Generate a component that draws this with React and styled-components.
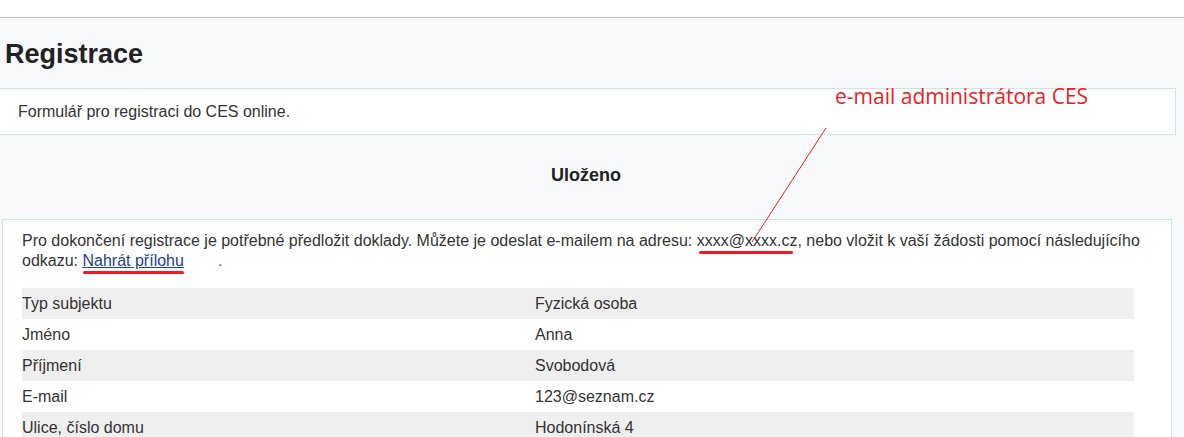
import React from "react";
import styled, { createGlobalStyle } from "styled-components";

const Global = createGlobalStyle`
  html, body { margin: 0; padding: 0; }
  body {
    background: #f8f9fb;
    font-family: "Liberation Sans", Arial, sans-serif;
    color: #333;
    font-size: 16px;
  }
`;

const TopBar = styled.div`
  height: 17px;
  background: #fff;
  border-bottom: 1px solid #c4c4c4;
`;

const Page = styled.main`
  position: relative;
  background: #f8f9fb;
  padding-bottom: 40px;
`;

const Title = styled.h1`
  margin: 20px 0 18px 5px;
  font-size: 27px;
  line-height: 32px;
  font-weight: bold;
  color: #222;
`;

const Panel = styled.section`
  background: #fff;
  border: 1px solid #cde5ef;
  box-sizing: border-box;
`;

const IntroPanel = styled(Panel)`
  margin-left: -1px;
  width: 1177px;
  padding: 13px 18px 12px 18px;
  font-size: 16px;
  line-height: 20px;
`;

const Status = styled.h2`
  margin: 29px 0 33px 0;
  text-align: center;
  font-size: 18px;
  line-height: 22px;
  font-weight: bold;
  color: #222;
  padding-right: 12px;
`;

const ResultPanel = styled(Panel)`
  margin-left: 2px;
  width: 1170px;
  padding: 11px 37px 0 19px;
`;

const Message = styled.p`
  margin: 0 -30px 17px 0;
  font-size: 16px;
  line-height: 20px;
`;

const Marked = styled.span`
  position: relative;
  &::after {
    content: "";
    position: absolute;
    left: ${(p) => p.$l || 0}px;
    right: ${(p) => p.$r || 0}px;
    bottom: -5px;
    height: 3px;
    border-radius: 2px;
    background: #ed1c24;
  }
`;

const Link = styled.a`
  color: #1d3f8f;
  text-decoration: underline;
  cursor: pointer;
`;

const Dot = styled.span`
  margin-left: 34px;
  color: #b04040;
`;

const Table = styled.div`
  display: flex;
  flex-direction: column;
`;

const Row = styled.div`
  display: grid;
  grid-template-columns: 513px 1fr;
  height: 31px;
  line-height: 31px;
  font-size: 16px;
  background: ${(p) => (p.$odd ? "#efefef" : "#fff")};
`;

const Annotation = styled.div`
  position: absolute;
  left: 835px;
  top: 44px;
  font-family: "Open Sans", "Noto Sans", sans-serif;
  font-size: 21px;
  color: #ed1c24;
  white-space: nowrap;
`;

const Pointer = styled.svg`
  position: absolute;
  left: 750px;
  top: 88px;
  overflow: visible;
`;

const rows = [
  ["Typ subjektu", "Fyzická osoba"],
  ["Jméno", "Anna"],
  ["Příjmení", "Svobodová"],
  ["E-mail", "123@seznam.cz"],
  ["Ulice, číslo domu", "Hodonínská 4"],
];

export default function App() {
  return (
    <>
      <Global />
      <TopBar />
      <Page>
        <Title>Registrace</Title>
        <IntroPanel>Formulář pro registraci do CES online.</IntroPanel>
        <Status>Uloženo</Status>
        <ResultPanel>
          <Message>
            Pro dokončení registrace je potřebné předložit doklady. Můžete je
            odeslat e-mailem na adresu: <Marked $l={2} $r={4}>xxxx@xxxx.cz</Marked>,
            nebo vložit k vaší žádosti pomocí následujícího odkazu:{" "}
            <Marked>
              <Link>Nahrát přílohu</Link>
            </Marked>
            <Dot>.</Dot>
          </Message>
          <Table>
            {rows.map(([k, v], i) => (
              <Row key={k} $odd={i % 2 === 0}>
                <span>{k}</span>
                <span>{v}</span>
              </Row>
            ))}
          </Table>
        </ResultPanel>
        <Annotation>e-mail administrátora CES</Annotation>
        <Pointer width="80" height="120" viewBox="0 0 80 120">
          <line x1="76" y1="2" x2="2" y2="116" stroke="#ed1c24" strokeWidth="1" />
        </Pointer>
      </Page>
    </>
  );
}
